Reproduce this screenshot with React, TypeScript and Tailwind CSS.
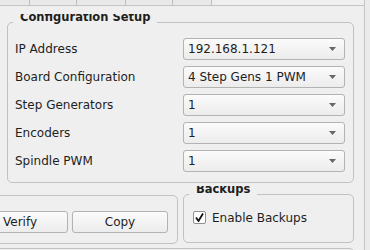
const rows = [
  { label: "IP Address", value: "192.168.1.121" },
  { label: "Board Configuration", value: "4 Step Gens 1 PWM" },
  { label: "Step Generators", value: "1" },
  { label: "Encoders", value: "1" },
  { label: "Spindle PWM", value: "1" },
]

const tabs = [30, 47, 49, 47, 39]

function Combo({ value }: { value: string }) {
  return (
    <div className="w-[162px] h-[22px] flex items-center pl-[4px] pr-[8px] border border-[#b3b3b3] rounded-[3px] bg-gradient-to-b from-[#fbfbfb] to-[#ececec] text-[12px] text-[#1e1e1e]">
      <span className="flex-1">{value}</span>
      <svg width="7" height="4" viewBox="0 0 7 4">
        <path d="M0 0 L7 0 L3.5 4 Z" fill="#666" />
      </svg>
    </div>
  )
}

function Button({ children }: { children: string }) {
  return (
    <div className="w-[96px] h-[22px] flex items-center justify-center border border-[#b3b3b3] rounded-[3px] bg-gradient-to-b from-[#fbfbfb] to-[#ececec] text-[12px] text-[#1e1e1e]">
      {children}
    </div>
  )
}

// group box title: its upper part is clipped the way the reference shows
function Title({ children }: { children: string }) {
  return (
    <div className="absolute left-[5px] top-[-9px] h-[11px] overflow-hidden px-[7px] bg-[#efefef]">
      <div className="mt-[-4px] text-[11.5px] leading-[14px] font-bold text-[#1e1e1e] whitespace-nowrap">
        {children}
      </div>
    </div>
  )
}

export default function App() {
  return (
    <div
      className="w-[370px] h-[250px] overflow-hidden flex bg-[#ebebeb]"
      style={{ fontFamily: '"DejaVu Sans", sans-serif' }}
    >
      <div className="w-[365px] shrink-0 flex flex-col bg-[#efefef] border-r border-[#c6c6c6]">
        {/* tab strip */}
        <div className="h-[6px] shrink-0 flex border-b border-[#c4c4c4]">
          {tabs.map((w, i) => (
            <div key={i} style={{ width: w }} className="h-full bg-[#e9e9e9] border-r border-[#bdbdbd]" />
          ))}
        </div>

        <div className="flex-1 overflow-hidden">
          {/* Configuration Setup */}
          <div className="relative mt-[16px] ml-[7px] w-[347px] h-[161px] border border-[#c2c2c2] rounded-[5px] pt-[15px] pl-[7px] pr-[8px] flex flex-col gap-[6px]">
            <Title>Configuration Setup</Title>
            {rows.map((r) => (
              <div key={r.label} className="flex items-center h-[22px]">
                <span className="flex-1 text-[12px] text-[#1e1e1e]">{r.label}</span>
                <Combo value={r.value} />
              </div>
            ))}
          </div>

          <div className="flex mt-[11px] gap-[5px]">
            {/* actions */}
            <div className="ml-[-40px] w-[218px] h-[49px] border border-[#c2c2c2] rounded-[5px] mt-[1px] pt-[15px] pr-[9px] flex justify-end gap-[4px]">
              <Button>Verify</Button>
              <Button>Copy</Button>
            </div>

            {/* Backups */}
            <div className="relative w-[171px] h-[49px] border border-[#c2c2c2] rounded-[5px] pt-[16px] pl-[9px]">
              <Title>Backups</Title>
              <div className="flex items-center h-[13px] gap-[6px]">
                <div className="w-[13px] h-[13px] bg-white border border-[#8e8e8e] rounded-[2px] flex items-center justify-center">
                  <svg width="9" height="9" viewBox="0 0 9 9">
                    <path d="M1 4.5 L3.5 8 L8 0.5" fill="none" stroke="#111" strokeWidth="1.8" />
                  </svg>
                </div>
                <span className="text-[12px] text-[#1e1e1e]">Enable Backups</span>
              </div>
            </div>
          </div>

          {/* next group, scrolled below */}
          <div className="ml-[-20px] w-[374px] h-[20px] mt-[4px] border-t border-x border-[#c2c2c2] rounded-t-[5px]" />
        </div>
      </div>
    </div>
  )
}
